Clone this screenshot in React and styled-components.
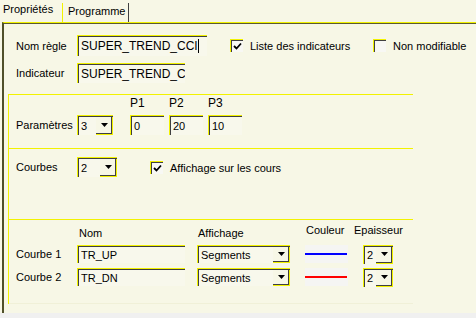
import styled, { createGlobalStyle } from 'styled-components';

const CREAM = '#F7F7E6';
const YELLOW = '#F2F200';
const DARK = '#404040';

const GlobalStyle = createGlobalStyle`
  body {
    margin: 0;
    font-family: 'Liberation Sans', Arial, sans-serif;
    font-size: 11px;
    color: #000;
  }
`;

function Arrow() {
    return (
        <svg width="7" height="4" viewBox="0 0 7 4">
            <polygon points="0,0 7,0 3.5,4" fill="#000" />
        </svg>
    );
}

function Check() {
    return (
        <svg width="9" height="9" viewBox="0 0 9 9">
            <polyline points="1,4 3.5,6.5 8,1.5" fill="none" stroke="#000" strokeWidth="1.8" />
        </svg>
    );
}

function Combo({ value, width, height = 20 }) {
    return (
        <ComboBox $width={width} $height={height}>
            <ComboText>{value}</ComboText>
            <ComboButton><Arrow /></ComboButton>
        </ComboBox>
    );
}

function CheckItem({ checked, label, width }) {
    return (
        <CheckWrap $width={width}>
            <CheckBox>{checked && <Check />}</CheckBox>
            <span>{label}</span>
        </CheckWrap>
    );
}

const curves = [
    { label: 'Courbe 1', name: 'TR_UP', color: '#0000FF' },
    { label: 'Courbe 2', name: 'TR_DN', color: '#FF0000' },
];

function App() {

    return (
        <>
            <GlobalStyle />
            <Screen>
                <Window>

                    <TabBar>
                        <ActiveTab>Propriétés</ActiveTab>
                        <Tab>Programme</Tab>
                    </TabBar>

                    <Panel>

                        <TopRow>
                            <Label>Nom règle</Label>
                            <TextField $width={130} $height={21} $big>
                                SUPER_TREND_CCI<Caret />
                            </TextField>
                            <Spacer $w={23} />
                            <CheckItem checked label="Liste des indicateurs" width={143} />
                            <CheckItem label="Non modifiable" />
                        </TopRow>

                        <TopRow $second>
                            <Label>Indicateur</Label>
                            <TextField $width={108} $height={20} $big>SUPER_TREND_C</TextField>
                        </TopRow>

                        <Group>

                            <Divider />
                            <ParamSection>
                                <Label>Paramètres</Label>
                                <Combo value="3" width={36} />
                                <Params>
                                    {[['P1', '0'], ['P2', '20'], ['P3', '10']].map(([p, v]) => (
                                        <ParamCol key={p}>
                                            <ParamTitle>{p}</ParamTitle>
                                            <TextField $width={34} $height={20}>{v}</TextField>
                                        </ParamCol>
                                    ))}
                                </Params>
                            </ParamSection>

                            <Divider />
                            <CurveCountSection>
                                <Label>Courbes</Label>
                                <Combo value="2" width={40} />
                                <CheckItem checked label="Affichage sur les cours" />
                            </CurveCountSection>

                            <Divider />
                            <CurvesSection>
                                <span />
                                <Header $pad={2}>Nom</Header>
                                <Header $pad={1}>Affichage</Header>
                                <Header $pad={1} $raised>Couleur</Header>
                                <Header $raised>Epaisseur</Header>

                                {curves.map((c) => (
                                    <Row key={c.label}>
                                        <Label>{c.label}</Label>
                                        <TextField $width={108} $height={18}>{c.name}</TextField>
                                        <Combo value="Segments" width={93} height={18} />
                                        <ColorBox>
                                            <ColorLine $color={c.color} />
                                        </ColorBox>
                                        <ThickCell>
                                            <Combo value="2" width={30} height={19} />
                                        </ThickCell>
                                    </Row>
                                ))}
                            </CurvesSection>
                            <Divider $faint />

                        </Group>

                    </Panel>

                </Window>
            </Screen>
        </>
    );
}

export default App;


const Screen = styled.div`
    width: 476px;
    height: 318px;
    background-color: #F0F0F0;
    overflow: hidden;
`;

const Window = styled.div`
    height: 313px;
    background-color: ${CREAM};
    display: flex;
    flex-direction: column;
`;

const TabBar = styled.div`
    height: 22px;
    display: flex;
    align-items: flex-start;
    flex-shrink: 0;
`;

const ActiveTab = styled.div`
    width: 59px;
    height: 19px;
    padding: 3px 0 0 3px;
    line-height: 13px;
`;

const Tab = styled.div`
    width: 60px;
    height: 17px;
    margin-top: 3px;
    padding: 2px 0 0 5px;
    line-height: 13px;
    border-left: 1px solid ${YELLOW};
    border-right: 1px solid ${DARK};
`;

const Panel = styled.div`
    flex: 1;
    margin-left: 2px;
    border-left: 2px solid #50502A;
    border-top: 1px solid ${YELLOW};
    box-shadow: inset 0 1px 0 #5A5A30;
    padding-top: 12px;
    display: flex;
    flex-direction: column;
    align-items: flex-start;
`;

const TopRow = styled.div`
    display: flex;
    align-items: center;
    padding-left: 12px;
    margin-top: ${(p) => (p.$second ? '7px' : '0')};
`;

const Label = styled.div`
    width: 61px;
    flex-shrink: 0;
    line-height: 20px;
    white-space: nowrap;
`;

const Spacer = styled.div`
    width: ${(p) => p.$w}px;
    flex-shrink: 0;
`;

const TextField = styled.div`
    box-sizing: border-box;
    width: ${(p) => p.$width}px;
    height: ${(p) => p.$height}px;
    flex-shrink: 0;
    border-top: 1px solid ${YELLOW};
    border-left: 1px solid ${YELLOW};
    box-shadow: inset 1px 1px 0 ${DARK};
    background-color: #F8F8EC;
    padding-left: 3px;
    display: flex;
    align-items: center;
    font-size: ${(p) => (p.$big ? '12px' : '11px')};
    white-space: nowrap;
    overflow: hidden;
`;

const Caret = styled.span`
    display: inline-block;
    width: 1px;
    height: 14px;
    background-color: #000;
`;

const CheckWrap = styled.div`
    display: flex;
    align-items: center;
    gap: 7px;
    width: ${(p) => (p.$width ? `${p.$width}px` : 'auto')};
    flex-shrink: 0;
    white-space: nowrap;
`;

const CheckBox = styled.div`
    box-sizing: border-box;
    width: 13px;
    height: 13px;
    border-top: 1px solid ${YELLOW};
    border-left: 1px solid ${YELLOW};
    box-shadow: inset 1px 1px 0 ${DARK};
    background-color: #F8F8F4;
    display: flex;
    align-items: center;
    justify-content: center;
    padding: 1px 0 0 1px;
`;

const ComboBox = styled.div`
    box-sizing: border-box;
    width: ${(p) => p.$width}px;
    height: ${(p) => p.$height}px;
    flex-shrink: 0;
    border-top: 1px solid ${YELLOW};
    border-left: 1px solid ${YELLOW};
    box-shadow: inset 1px 1px 0 ${DARK};
    background-color: #F8F8EC;
    display: flex;
    align-items: stretch;
`;

const ComboText = styled.div`
    flex: 1;
    padding-left: 3px;
    display: flex;
    align-items: center;
    overflow: hidden;
    white-space: nowrap;
`;

const ComboButton = styled.div`
    box-sizing: border-box;
    width: 17px;
    margin-top: 1px;
    background-color: ${CREAM};
    border-right: 1px solid ${YELLOW};
    border-bottom: 1px solid ${YELLOW};
    box-shadow: inset -1px -1px 0 ${DARK};
    display: flex;
    align-items: center;
    justify-content: center;
    padding-bottom: 1px;
`;

const Group = styled.div`
    box-sizing: border-box;
    width: 405px;
    margin: 11px 0 0 4px;
    border-left: 1px solid ${YELLOW};
    display: grid;
    grid-template-columns: 404px;
    grid-template-rows: 1px 53px 1px 70px 1px 83px 1px;
    overflow: hidden;
`;

const Divider = styled.div`
    width: 404px;
    height: 1px;
    background-color: ${(p) => (p.$faint ? '#F0F0D8' : YELLOW)};
`;

const ParamSection = styled.div`
    padding: 0 0 13px 7px;
    display: grid;
    grid-template-columns: 61px 36px auto;
    align-items: end;
    justify-content: start;
`;

const Params = styled.div`
    display: flex;
    gap: 5px;
    margin-left: 17px;
`;

const ParamCol = styled.div`
    display: flex;
    flex-direction: column;
    gap: 5px;
`;

const ParamTitle = styled.div`
    line-height: 13px;
    font-size: 12px;
`;

const CurveCountSection = styled.div`
    padding: 8px 0 0 7px;
    display: grid;
    grid-template-columns: 61px 73px auto;
    align-items: start;
    justify-content: start;
    > ${CheckWrap} { margin-top: 4px; }
`;

const CurvesSection = styled.div`
    padding: 4px 0 0 7px;
    display: grid;
    grid-template-columns: 61px 120px 108px 49px 1fr;
    grid-template-rows: 16px 18px 18px;
    row-gap: 5px;
    align-items: center;
`;

const Row = styled.div`
    display: contents;
`;

const Header = styled.div`
    align-self: end;
    line-height: 13px;
    padding-left: ${(p) => p.$pad || 0}px;
    margin-bottom: ${(p) => (p.$raised ? '3px' : '0')};
    white-space: nowrap;
`;

const ColorBox = styled.div`
    width: 43px;
    height: 18px;
    background-color: #F5F5F3;
    display: flex;
    align-items: center;
`;

const ColorLine = styled.div`
    width: 42px;
    height: 2px;
    background-color: ${(p) => p.$color};
`;

const ThickCell = styled.div`
    padding-left: 9px;
    display: flex;
`;
